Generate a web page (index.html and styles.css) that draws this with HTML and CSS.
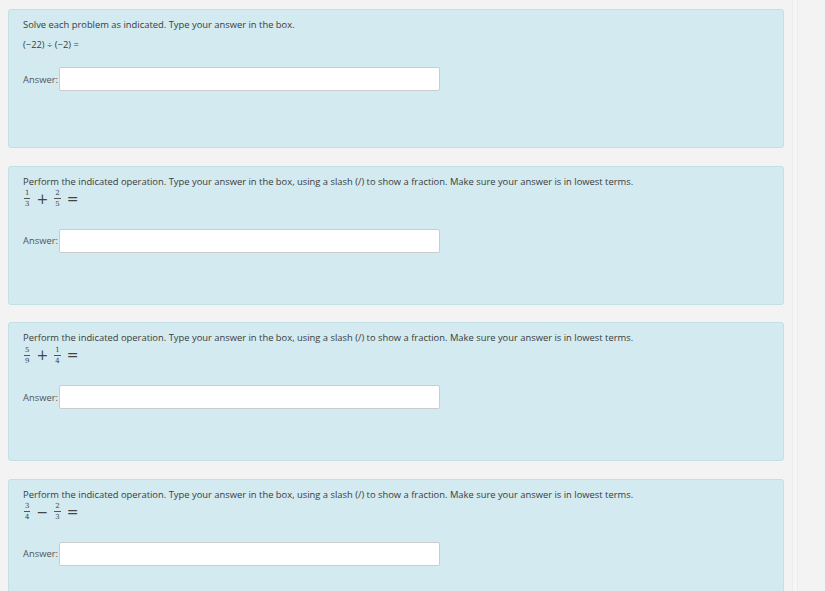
FILE: index.html
```html
<!DOCTYPE html>
<html lang="en">
<head>
    <meta charset="UTF-8">
    <title>Practice</title>
    <link rel="stylesheet" href="styles.css">
</head>
<body>

<div class="page">
    <div class="main">
        <div class="question">
            <p class="prompt">Solve each problem as indicated. Type your answer in the box.</p>
            <p class="expr">(&minus;22) &divide; (&minus;2) =</p>
            <div class="answer">
                <label>Answer:</label>
                <input type="text">
            </div>
        </div>

        <div class="question">
            <p class="prompt">Perform the indicated operation. Type your answer in the box, using a slash (/) to show a fraction. Make sure your answer is in lowest terms.</p>
            <div class="math">
                <span class="frac"><span class="num">1</span><span class="den">3</span></span>
                <span class="op">+</span>
                <span class="frac"><span class="num">2</span><span class="den">5</span></span>
                <span class="op">=</span>
            </div>
            <div class="answer">
                <label>Answer:</label>
                <input type="text">
            </div>
        </div>

        <div class="question">
            <p class="prompt">Perform the indicated operation. Type your answer in the box, using a slash (/) to show a fraction. Make sure your answer is in lowest terms.</p>
            <div class="math">
                <span class="frac"><span class="num">5</span><span class="den">9</span></span>
                <span class="op">+</span>
                <span class="frac"><span class="num">1</span><span class="den">4</span></span>
                <span class="op">=</span>
            </div>
            <div class="answer">
                <label>Answer:</label>
                <input type="text">
            </div>
        </div>

        <div class="question">
            <p class="prompt">Perform the indicated operation. Type your answer in the box, using a slash (/) to show a fraction. Make sure your answer is in lowest terms.</p>
            <div class="math">
                <span class="frac"><span class="num">3</span><span class="den">4</span></span>
                <span class="op">&minus;</span>
                <span class="frac"><span class="num">2</span><span class="den">3</span></span>
                <span class="op">=</span>
            </div>
            <div class="answer">
                <label>Answer:</label>
                <input type="text">
            </div>
        </div>
    </div>
    <div class="side"></div>
</div>

</body>
</html>
```

FILE: styles.css
```css
body {
    margin: 0;
    background-color: #f3f3f3;
    font-family: "Open Sans", Arial, sans-serif;
    font-size: 9.4px;
    color: #3c3c3c;
}
.page {
    display: flex;
    min-height: 591px;
}
.main {
    width: 776px;
    padding: 9px 0 0 8px;
}
.side {
    margin-left: 8px;
    flex: 1;
    border-left: 1px solid #ececec;
    border-right: 1px solid #ececec;
    max-width: 4px;
    background: #f6f6f6;
}
.question {
    box-sizing: border-box;
    height: 139px;
    margin-bottom: 17.6px;
    padding: 8px 14px 0;
    background: #d2eaf0;
    border: 1px solid #c4e0e7;
    border-radius: 3px;
}
.prompt {
    margin: 0 0 7px;
    line-height: 13px;
}
.expr {
    margin: 0;
    line-height: 13px;
}
.math {
    display: flex;
    align-items: center;
    height: 22px;
    margin-top: -7px;
}
.frac {
    display: inline-flex;
    flex-direction: column;
    align-items: center;
    font-family: "DejaVu Serif", "Liberation Serif", serif;
    font-size: 7px;
    line-height: 8px;
    padding: 0 1px;
    color: #444;
}
.frac .num {
    border-bottom: 1px solid #555;
    padding: 0 1px 1px;
}
.frac .den {
    padding-top: 1px;
}
.op {
    font-family: "DejaVu Serif", "Liberation Serif", serif;
    font-size: 14px;
    margin: 0 5px;
    color: #444;
}
.answer {
    display: flex;
    align-items: center;
    margin-top: 16px;
}
.math + .answer {
    margin-top: 19px;
}
.answer label {
    width: 36px;
    color: #555;
}
.answer input {
    box-sizing: border-box;
    width: 381px;
    height: 24px;
    margin: 0;
    border: 1px solid #ccc;
    border-radius: 2px;
    background: #fff;
}
```
